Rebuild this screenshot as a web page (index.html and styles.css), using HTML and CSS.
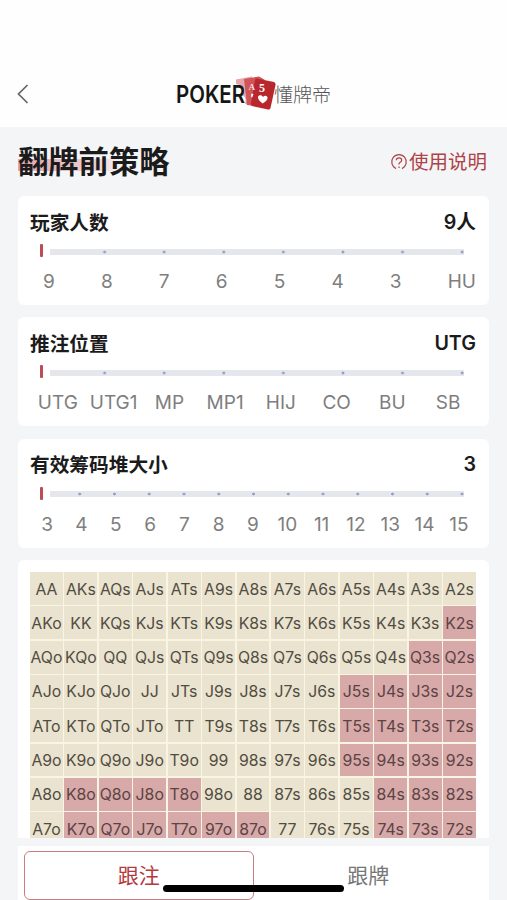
FILE: index.html
```html
<!DOCTYPE html>
<html lang="zh-CN">
<head>
<meta charset="utf-8">
<title>翻牌前策略</title>
<link rel="stylesheet" href="styles.css">
</head>
<body>
<div class="app">
  <header class="topbar">
    <svg class="back" viewBox="0 0 12 20"><path d="M10.5 1 1.5 10l9 9"/></svg>
    <svg class="logo" viewBox="0 0 156 38" role="img">
      <path class="card-back" d="M60 4.5 76 1.5 75 30 69 29Q71 23 67 20.500Q72 12 60 9Z"/>
      <path class="card-mid" d="M68 4 83 1.500 89 5 81 31 71 30Z"/>
      <path class="card-front" d="M80.500 3.500 98 7Q100 8 99.500 10L94.500 33Q94 35 92 34.500L76 31Q74.500 30 75 28L79 5Q79.500 3.500 80.500 3.500Z"/>
      <text class="logo-en" x="0" y="27.500" textLength="69" lengthAdjust="spacingAndGlyphs">POKER</text>
      <text class="card-a" x="72.500" y="14.500">A</text>
      <text class="card-5" x="83" y="17">5</text>
      <path class="heart" d="M86.500 28.500Q81.500 24.500 82 22C82.500 19.500 86 19.500 87 22C89 19.500 92 21 91.500 23.500Q91 26 86.500 28.500Z"/>
      <path class="heart" d="M75.500 18.500 77.500 19 76 23 75 21Z"/>
      <text class="logo-cn" x="98" y="26.500" textLength="57">懂牌帝</text>
    </svg>
  </header>

  <main class="page">
    <div class="heading">
      <h1 class="title">翻牌前策略</h1>
      <a class="help">
        <svg class="help-icon" viewBox="0 0 18 18"><path d="M6 15.600A7.300 7.300 0 1 1 12 15.600"/><path d="M6.300 7.300Q6.300 4.800 9 4.800T11.700 7.200Q11.700 8.400 10.200 9.200T9 11.500M9 13.500V15"/></svg>
        <span>使用说明</span>
      </a>
    </div>

    <section class="card">
      <div class="card-head"><h2>玩家人数</h2><span class="value">9人</span></div>
      <div class="slider"><i class="thumb"></i><div class="track steps-7"></div></div>
      <div class="labels spread"><span>9</span><span>8</span><span>7</span><span>6</span><span>5</span><span>4</span><span>3</span><span>HU</span></div>
    </section>

    <section class="card">
      <div class="card-head"><h2>推注位置</h2><span class="value">UTG</span></div>
      <div class="slider"><i class="thumb"></i><div class="track steps-7"></div></div>
      <div class="labels"><span>UTG</span><span>UTG1</span><span>MP</span><span>MP1</span><span>HIJ</span><span>CO</span><span>BU</span><span>SB</span></div>
    </section>

    <section class="card">
      <div class="card-head"><h2>有效筹码堆大小</h2><span class="value">3</span></div>
      <div class="slider"><i class="thumb"></i><div class="track steps-12"></div></div>
      <div class="labels"><span>3</span><span>4</span><span>5</span><span>6</span><span>7</span><span>8</span><span>9</span><span>10</span><span>11</span><span>12</span><span>13</span><span>14</span><span>15</span></div>
    </section>

    <section class="matrix-card"><div class="matrix"></div></section>

    <nav class="tabs">
      <button class="tab active">跟注</button>
      <button class="tab">跟牌</button>
    </nav>
  </main>
  <div class="home-indicator"></div>
</div>
<script src="app.js"></script>
</body>
</html>
```
FILE: styles.css
```css
* { box-sizing: border-box; }
body { margin: 0; background: #f4f5f7; font-family: Inter, "Noto Sans CJK SC", sans-serif; color: #1b1b1c; }
.app { position: relative; height: 900px; overflow: hidden; display: flex; flex-direction: column; }

.topbar { height: 127px; flex: none; background: #fefefe; display: grid; grid-template-columns: 1fr 156px 1fr; align-items: start; padding: 75px 16px 0 17px; }
.back { width: 12px; height: 20px; margin-top: 9px; fill: none; stroke: #666; stroke-width: 1.7; }
.logo { width: 156px; height: 38px; }
.logo-en { font: 600 24.500px Inter, sans-serif; fill: #161616; }
.logo-cn { font: 300 19px "Noto Sans CJK SC", sans-serif; fill: #555; }
.card-back { fill: #e7a5a7; }
.card-mid { fill: #cf5558; }
.card-front { fill: #b9272e; }
.card-a, .card-5 { font: 700 9px "Liberation Serif", serif; fill: #fff; }
.card-a { fill: #f8dcdc; }
.card-5 { font-size: 12px; }
.heart { fill: #fff; }

.page { flex: 1; min-height: 0; padding: 0 18px; display: flex; flex-direction: column; }
.heading { height: 69px; flex: none; display: flex; justify-content: space-between; align-items: center; }
.title { margin: 0; font-size: 30.300px; line-height: 44px; font-weight: 700; background: linear-gradient(90deg, #e5a5ab, rgba(229, 165, 171, 0.500) 70%, rgba(229, 165, 171, 0)) 0 19px / 106px 12px no-repeat; }
.help { display: flex; align-items: center; gap: 1px; color: #ae4348; font-size: 19.500px; line-height: 30px; margin-right: 2px; }
.help-icon { width: 18px; height: 18px; fill: none; stroke: currentColor; stroke-width: 1.200; }

.card { height: 109px; flex: none; margin-bottom: 12.400px; padding: 11px 13px 0 12px; background: #fff; border-radius: 6px; }
.card-head { height: 31px; display: flex; justify-content: space-between; align-items: center; }
.card-head h2, .value { margin: 0; font-size: 19.700px; line-height: 30px; font-weight: 600; }
.card-head h2 { font-weight: 700; }
.value { position: relative; top: -1px; }
.slider { height: 27px; padding-left: 10px; display: flex; align-items: center; gap: 7px; }
.thumb { width: 3px; height: 13px; margin-bottom: 2px; border-radius: 1px; background: #bb4b55; }
.track { width: 414px; height: 6px; background-color: #e5e7ec; background-image: radial-gradient(circle, #8fa0c4 1px, rgba(154, 169, 200, 0) 1.800px); }
.steps-7 { background-size: 59.600px 6px; background-position: -34.800px 0; }
.steps-12 { background-size: 34.750px 6px; background-position: -22.375px 0; }
.labels { display: grid; grid-auto-flow: column; grid-auto-columns: 1fr; text-align: center; font-size: 19px; line-height: 33px; color: #7e7e7e; }
.spread { display: flex; justify-content: space-between; padding-left: 13px; }

.matrix-card { height: 278px; flex: none; padding: 12px 13px 0 12px; overflow: hidden; background: #fff; border-radius: 6px 6px 0 0; }
.matrix { display: grid; grid-template-columns: repeat(13, 1fr); grid-auto-rows: 32.800px; gap: 1.500px; background: #faf5e2; font-size: 15.800px; color: #514c42; }
.hand { display: flex; align-items: center; justify-content: center; min-width: 0; padding-top: 1px; white-space: nowrap; background: #e9e3cf; }
.hand.fold { background: #d7a9a9; color: #5c4343; }

.tabs { flex: 1; margin-top: 8px; padding: 5px 6px 0; display: flex; background: #fff; }
.tab { flex: 1; height: 49px; padding: 0 0 3px; border: 1.500px solid rgba(0, 0, 0, 0); border-radius: 6px; background: none; font: 400 21px/43px "Noto Sans CJK SC", sans-serif; color: #777; }
.tab.active { color: #b5383e; border-color: #cc7d83; }
.home-indicator { position: absolute; left: 163px; top: 885px; width: 181px; height: 7px; border-radius: 4px; background: #000; }
```
FILE: app.js
```js
const ranks = "AKQJT98765432";
// Folded column ranges for each visible row, as [first, last].
const folds = [[], [[12, 12]], [[11, 12]], [[9, 12]], [[9, 12]], [[9, 12]], [[1, 4], [10, 12]], [[1, 6], [10, 12]]];
const matrix = document.querySelector(".matrix");

folds.forEach((ranges, row) => {
  for (let col = 0; col < 13; col++) {
    const cell = document.createElement("div");
    const fold = ranges.some(([a, b]) => col >= a && col <= b);
    cell.className = fold ? "hand fold" : "hand";
    cell.textContent = row === col ? ranks[row] + ranks[row]
      : row < col ? ranks[row] + ranks[col] + "s"
      : ranks[col] + ranks[row] + "o";
    matrix.append(cell);
  }
});
```
